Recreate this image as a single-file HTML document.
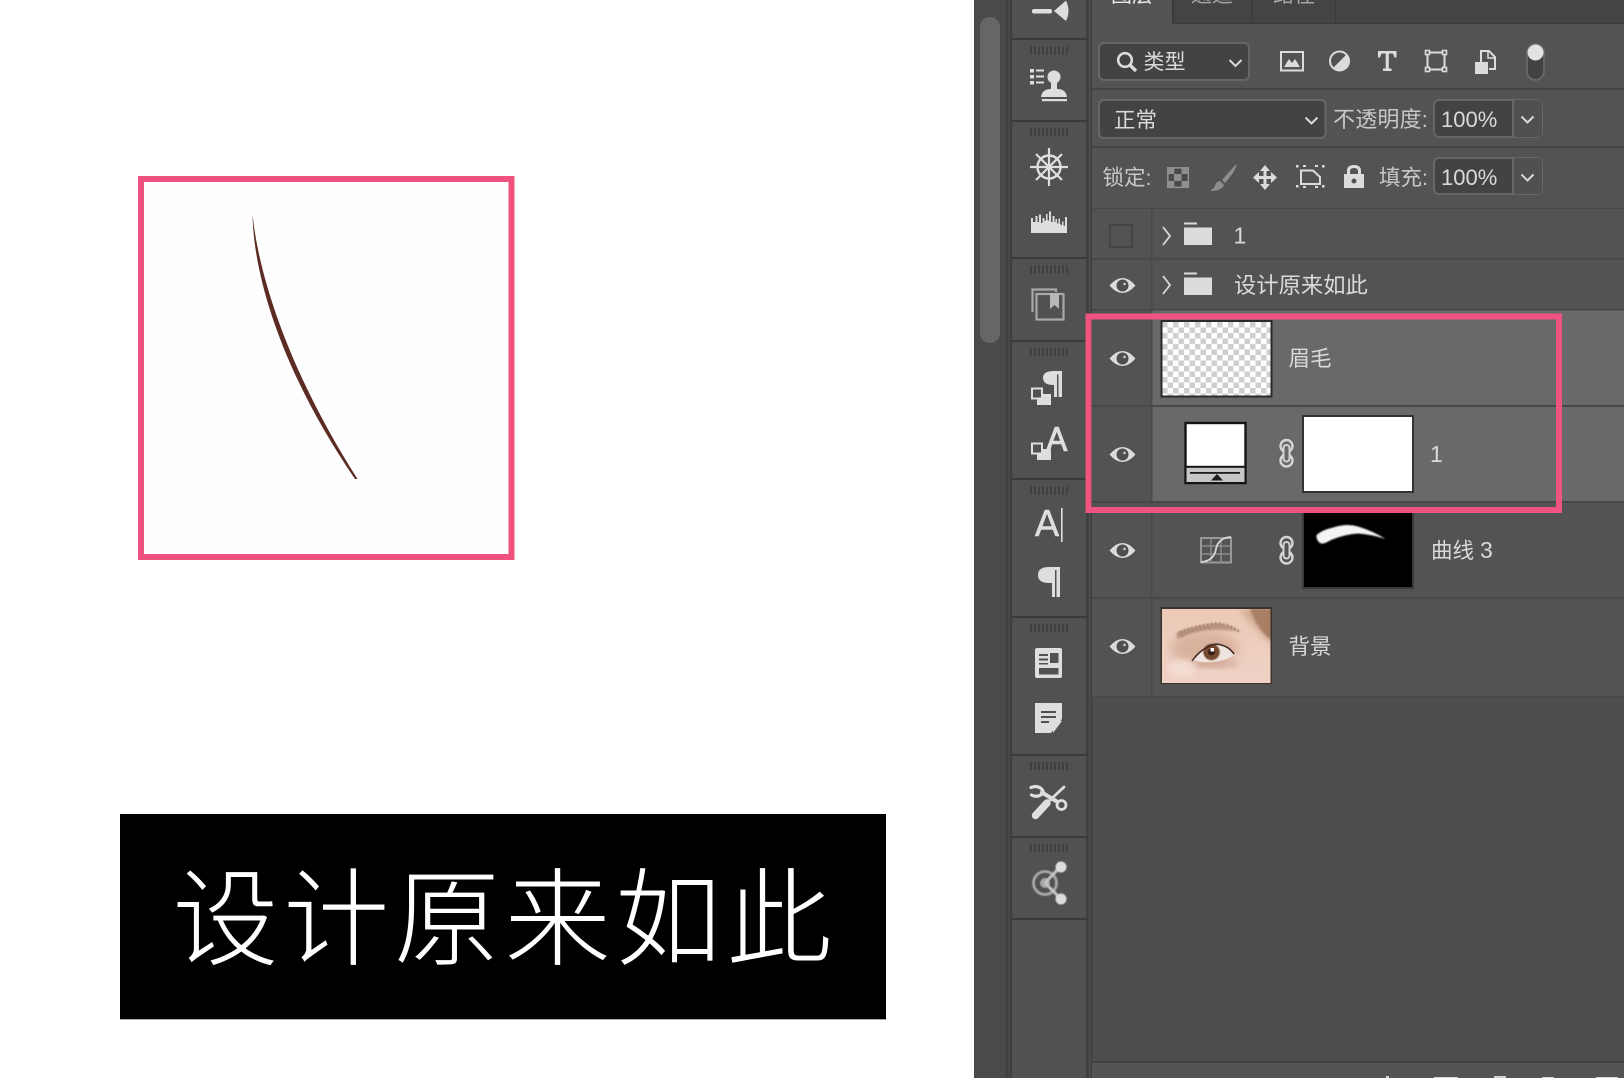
<!DOCTYPE html>
<html lang="zh">
<head>
<meta charset="utf-8">
<title>设计原来如此</title>
<style>
html,body{margin:0;padding:0;background:#fff;width:1624px;height:1078px;overflow:hidden}
svg{display:block}
text{font-family:"Liberation Sans","Noto Sans CJK SC",sans-serif;fill:#d9d9d9;font-size:21px}
.l{fill:#dadada}
</style>
</head>
<body>
<svg xmlns="http://www.w3.org/2000/svg" width="1624" height="1078" viewBox="0 0 1624 1078">
<defs>
<pattern id="chk" x="1162" y="322" width="11" height="11" patternUnits="userSpaceOnUse">
<rect width="11" height="11" fill="#fff"/><rect width="5.500" height="5.500" fill="#cfcfcf"/><rect x="5.500" y="5.500" width="5.500" height="5.500" fill="#cfcfcf"/>
</pattern>
<linearGradient id="skin" x1="0" y1="0" x2="0" y2="1"><stop offset="0" stop-color="#ecc9b6"/><stop offset="1" stop-color="#efd2c5"/></linearGradient>
<filter id="b1"><feGaussianBlur stdDeviation="1"/></filter>
<filter id="b3"><feGaussianBlur stdDeviation="3"/></filter>
<filter id="b5"><feGaussianBlur stdDeviation="5"/></filter>
<filter id="b05"><feGaussianBlur stdDeviation=".5"/></filter>
<filter id="b07"><feGaussianBlur stdDeviation=".8"/></filter>
<clipPath id="ph"><rect x="1162" y="609" width="108.500" height="74"/></clipPath>
<g id="eye"><path d="M1109.5 0Q1122.5-15 1135.5 0Q1122.5 15 1109.5 0Z" fill="#dcdcdc"/><circle cx="1122.5" cy="0" r="6" fill="#4f4f4f"/><circle cx="1124.5" cy="-1.5" r="1.2" fill="#dcdcdc"/></g>
<g id="link" fill="none" stroke="#d4d4d4" stroke-width="2.400">
<circle cx="1286.500" cy="446" r="6"/><circle cx="1286.500" cy="460.500" r="6"/>
<rect x="1283.500" y="445" width="6" height="16.500" rx="3" fill="currentColor" stroke-width="2"/>
</g>
<g id="grip"><path d="M1030 0H1069" stroke="#404040" stroke-width="8" stroke-dasharray="2 2" fill="none"/></g>
<path id="chev" d="M0 0L6 6L12 0" fill="none" stroke="#d9d9d9" stroke-width="2"/>
</defs>

<rect width="1624" height="1078" fill="#fff"/>

<!-- left artwork -->
<rect x="141" y="179" width="370.500" height="378" fill="#fefefe" stroke="#f0527f" stroke-width="6"/>
<path d="M252.500 214C258 270 285 365 357.500 479L355 479C280 369 253.500 274 252.500 214Z" fill="#5c2b24"/>
<rect x="120" y="814" width="766" height="205" fill="#000"/>
<rect x="120" y="1019" width="766" height="1" fill="#aaa"/>
<text x="172.500" y="957" style="font-size:106px;font-weight:300;fill:#fff;letter-spacing:4.700px">设计原来如此</text>

<!-- panel base -->
<rect x="974" y="0" width="650" height="1078" fill="#4e4e4e"/>
<rect x="974" y="0" width="32" height="1078" fill="#4a4a4a"/>
<rect x="980" y="17" width="20" height="326" rx="10" fill="#666"/>
<rect x="1006" y="0" width="6" height="1078" fill="#474747"/>
<rect x="1006" y="0" width="1.5" height="1078" fill="#3c3c3c"/>
<rect x="1010.5" y="0" width="1.5" height="1078" fill="#3c3c3c"/>
<rect x="1012" y="0" width="75" height="1078" fill="#515151"/>
<rect x="1086.5" y="0" width="2" height="1078" fill="#3c3c3c"/>
<rect x="1088.5" y="0" width="2.5" height="1078" fill="#4a4a4a"/>
<rect x="1091" y="0" width="1.5" height="1078" fill="#3e3e3e"/>

<!-- toolbar separators -->
<g fill="#3a3a3a">
<rect x="1011" y="38" width="76" height="2"/><rect x="1011" y="120" width="76" height="2"/><rect x="1011" y="257" width="76" height="2"/><rect x="1011" y="340" width="76" height="2"/><rect x="1011" y="478" width="76" height="2"/><rect x="1011" y="616" width="76" height="2"/><rect x="1011" y="754" width="76" height="2"/><rect x="1011" y="836" width="76" height="2"/><rect x="1011" y="918" width="76" height="2"/>
</g>
<use href="#grip" y="50.5"/><use href="#grip" y="132"/><use href="#grip" y="269.5"/><use href="#grip" y="352"/><use href="#grip" y="490.5"/><use href="#grip" y="628"/><use href="#grip" y="766"/><use href="#grip" y="848"/>

<!-- toolbar icons -->
<g fill="#dedede">
<!-- light -->
<rect x="1032" y="9" width="20" height="4.5" rx="2"/><path d="M1054 11L1066 0.5Q1071 11 1066 21Z"/>
<!-- stamp -->
<rect x="1030" y="69" width="4" height="3.5"/><rect x="1030" y="75" width="4" height="3.5"/><rect x="1030" y="81" width="4" height="3.5"/>
<rect x="1036" y="69.5" width="8" height="2"/><rect x="1036" y="75.5" width="8" height="2"/><rect x="1036" y="81.5" width="8" height="2"/>
<circle cx="1054" cy="77" r="6.5"/><path d="M1051 80H1057L1057 89Q1066 89 1067 97H1041Q1042 89 1051 89Z"/><rect x="1042" y="99" width="25" height="2.2"/>
<!-- histogram -->
<path d="M1031 233V218H1033V222H1035.500V216H1037.500V222H1039V214.500H1041V223H1042.500V218H1044.500V221.500L1046 220V214H1047.500V220L1049 221V211.500H1051V222H1052.500V216H1054.500V222H1055.500V219H1057V223.500H1058.500V218.500H1060V224L1062 225.500V221.500H1063.500V225.500L1065 226V217H1067V233Z"/>
<!-- para styles -->
<path d="M1054 371H1062V397H1058.5V374.5H1057V397H1054V385Q1043 385 1043 378Q1043 371 1054 371Z"/>
<rect x="1037" y="394" width="14" height="11"/>
<rect x="1032" y="388.5" width="10" height="10" fill="#515151" stroke="#dedede" stroke-width="2"/>
<!-- A styles -->
<rect x="1037" y="449" width="14" height="11"/>
<rect x="1032" y="443.5" width="10" height="10" fill="#515151" stroke="#dedede" stroke-width="2"/>
<path d="M1046 451L1055 427H1058.5L1067.5 451H1064L1061.5 444H1052L1049.5 451ZM1053 441H1060.5L1056.8 431Z" stroke="#dedede" stroke-width=".6"/>
<!-- A| -->
<path d="M1035 536L1045 510H1049L1059 536H1055.5L1053 529.5H1041L1038.5 536ZM1042 526.5H1052L1047 513Z" stroke="#dedede" stroke-width=".6"/>
<rect x="1061" y="508" width="1.6" height="34"/>
<!-- para -->
<path d="M1049 567H1060V597H1056.5V570H1055V597H1052V583H1049Q1038 583 1038 575Q1038 567 1049 567Z"/>
<!-- article -->
<path d="M1037 648H1060Q1062 648 1062 650V676Q1062 678 1060 678H1037Q1035 678 1035 676V650Q1035 648 1037 648Z"/>
<g fill="#515151"><rect x="1039" y="654" width="9" height="2"/><rect x="1039" y="658.500" width="9" height="2"/><rect x="1039" y="663" width="9" height="1.500"/><rect x="1050" y="653" width="8.500" height="10"/><rect x="1039" y="668" width="19.500" height="6.500"/></g>
<!-- note -->
<path fill-rule="evenodd" d="M1035 703H1062V719L1051 733H1035ZM1041 711V713H1056V711ZM1041 716V718H1056V716ZM1041 721V723H1049V721Z"/>
<path d="M1053 733V721H1062Z"/>
</g>
<!-- helm -->
<g fill="none" stroke="#dedede" stroke-width="2.4">
<circle cx="1049" cy="167" r="11.5"/>
<path d="M1049 148V186M1030 167H1068M1036 154L1062 180M1062 154L1036 180" stroke-width="2.2"/>
</g>
<!-- book -->
<g fill="none" stroke="#a8a8a8" stroke-width="2.2">
<path d="M1032.500 312V289.500H1056V292"/>
<rect x="1036.500" y="294" width="27" height="25.500"/>
</g>
<path d="M1050 293H1059V309L1054.500 305L1050 309Z" fill="#b8b8b8"/>
<!-- tools -->
<g fill="none" stroke="#dedede" stroke-linecap="round">
<path d="M1035.500 815.500L1047 803" stroke-width="7.500"/>
<path d="M1047 803L1064 787" stroke-width="2.800"/>
<path d="M1031 787.500Q1039 784.500 1043 791" stroke-width="3.200"/>
<path d="M1031.500 795Q1037 798 1042 794" stroke-width="3.200"/>
<path d="M1042 792.500L1056 801" stroke-width="4"/>
<circle cx="1061.500" cy="805" r="4.500" stroke-width="2.800"/>
</g>
<!-- share -->
<g filter="url(#b05)">
<circle cx="1045" cy="883" r="11.500" fill="none" stroke="#a8a8a8" stroke-width="2.800"/>
<circle cx="1045" cy="883" r="5" fill="#a8a8a8"/>
<path d="M1045 883L1061 866M1045 883L1061 899" stroke="#c4c4c4" stroke-width="3" fill="none"/>
<circle cx="1061" cy="867" r="5.500" fill="#dcdcdc"/><circle cx="1061" cy="899" r="5.500" fill="#dcdcdc"/>
</g>

<!-- tabs -->
<rect x="1092" y="0" width="532" height="23" fill="#444"/>
<rect x="1092" y="0" width="80" height="24" fill="#545454"/>
<rect x="1172" y="0" width="2" height="24" fill="#3b3b3b"/>
<rect x="1172" y="22.500" width="452" height="1.500" fill="#3b3b3b"/>
<rect x="1251" y="0" width="1.500" height="23" fill="#3b3b3b"/>
<rect x="1335" y="0" width="1.500" height="23" fill="#3b3b3b"/>
<text x="1111" y="2" style="fill:#e8e8e8;font-size:21px">图层</text>
<text x="1191" y="2" style="fill:#a6a6a6;font-size:21px">通道</text>
<text x="1273" y="2" style="fill:#a6a6a6;font-size:21px">路径</text>

<!-- control rows -->
<rect x="1092" y="24" width="532" height="185" fill="#535353"/>
<rect x="1092" y="88" width="532" height="2" fill="#434343"/>
<rect x="1092" y="146" width="532" height="2" fill="#434343"/>
<rect x="1092" y="208" width="532" height="1.500" fill="#484848"/>

<!-- filter select -->
<rect x="1099" y="43" width="150" height="37" rx="5" fill="#434343" stroke="#666" stroke-width="2"/>
<circle cx="1125" cy="60" r="6.800" fill="none" stroke="#dcdcdc" stroke-width="2.600"/>
<path d="M1130 65L1136 71" stroke="#dcdcdc" stroke-width="3.400" fill="none"/>
<text x="1143.500" y="69" style="font-size:21px" class="l">类型</text>
<use href="#chev" x="1229.500" y="60"/>

<!-- filter icons -->
<g>
<rect x="1281" y="52" width="22" height="18.500" fill="none" stroke="#dcdcdc" stroke-width="2"/>
<path d="M1284 67L1289 59L1292 63L1295 59L1300 67Z" fill="#dcdcdc"/>
<circle cx="1339.500" cy="61" r="9.500" fill="none" stroke="#dcdcdc" stroke-width="2"/>
<path d="M1346.500 54.500A9.500 9.500 0 0 1 1333 68Z" fill="#dcdcdc"/>
<path d="M1378 51H1396.500V57.500H1394.500L1393 53.500H1388.800V68.500H1391.500V71H1383V68.500H1385.700V53.500H1381.500L1380 57.500H1378Z" fill="#dcdcdc"/>
<rect x="1427.500" y="52.500" width="17" height="17" fill="none" stroke="#dcdcdc" stroke-width="2"/>
<g fill="#535353" stroke="#dcdcdc" stroke-width="1.600"><rect x="1425.500" y="50.500" width="4" height="4"/><rect x="1442.500" y="50.500" width="4" height="4"/><rect x="1425.500" y="67.500" width="4" height="4"/><rect x="1442.500" y="67.500" width="4" height="4"/></g>
<path d="M1481 62V51H1489L1495 57V69H1489" fill="none" stroke="#dcdcdc" stroke-width="2"/>
<path d="M1488 52V58H1495" fill="none" stroke="#dcdcdc" stroke-width="1.500"/>
<rect x="1475" y="62" width="13" height="12" fill="#dcdcdc"/>
<rect x="1527" y="44" width="17" height="36" rx="8.500" fill="#434343" stroke="#666" stroke-width="2"/>
<circle cx="1535.500" cy="52.500" r="8" fill="#e2e2e2"/>
</g>

<!-- blend row -->
<rect x="1099" y="100" width="226.500" height="38" rx="5" fill="#434343" stroke="#666" stroke-width="2"/>
<text x="1114" y="127.500" style="font-size:21.500px" class="l">正常</text>
<use href="#chev" x="1305.500" y="117.500"/>
<text x="1333" y="127" style="font-size:22px;fill:#c8c8c8;letter-spacing:.2px">不透明度:</text>
<rect x="1434" y="100" width="108" height="37" rx="5" fill="#434343" stroke="#666" stroke-width="2"/>
<rect x="1513" y="100" width="29" height="37" rx="4" fill="#505050"/>
<rect x="1512" y="100" width="2" height="37" fill="#666"/>
<text x="1441" y="127" style="font-size:22px" class="l">100%</text>
<use href="#chev" x="1521.500" y="116.500"/>

<!-- lock row -->
<text x="1102.500" y="185" style="font-size:21.500px;fill:#c8c8c8">锁定:</text>
<rect x="1167.800" y="167.800" width="20.500" height="19.500" fill="#4a4a4a" stroke="#8f8f8f" stroke-width="1.600"/>
<g fill="#8f8f8f"><rect x="1167" y="167" width="7.300" height="7"/><rect x="1181.500" y="167" width="7.500" height="7"/><rect x="1174" y="174" width="7.500" height="7"/><rect x="1167" y="181" width="7.300" height="7"/><rect x="1181.500" y="181" width="7.500" height="7"/></g>
<path d="M1237 164Q1233 167 1222 180L1225 183Q1235 172 1237 164Z" fill="#8d8d8d"/>
<path d="M1220 181L1224 185Q1222 191 1210 191Q1214 188 1215 186Q1216 181 1220 181Z" fill="#8d8d8d"/>
<g fill="#dcdcdc">
<path d="M1253 177.500L1259 172V176H1263.500V171H1260L1265 165L1270 171H1266.500V176H1271V172L1277 177.500L1271 183V179H1266.500V184H1270L1265 190L1260 184H1263.500V179H1259V183Z"/>
</g>
<path d="M1301 170.500H1313L1320 177V184H1301Z" fill="none" stroke="#dcdcdc" stroke-width="2"/>
<g fill="#dcdcdc"><rect x="1296" y="165" width="2.500" height="2.500"/><rect x="1322" y="165" width="2.500" height="2.500"/><rect x="1296" y="185" width="2.500" height="2.500"/><rect x="1322" y="185" width="2.500" height="2.500"/><rect x="1303" y="165" width="3" height="2"/><rect x="1315" y="165" width="3" height="2"/><rect x="1303" y="186" width="3" height="2"/><rect x="1315" y="186" width="3" height="2"/></g>
<path fill-rule="evenodd" d="M1344 174H1347V171Q1347 165 1354 165Q1361 165 1361 171V174H1364V188H1344ZM1350 171V174H1358V171Q1358 168 1354 168Q1350 168 1350 171ZM1354 178.500A2.500 2.500 0 1 0 1354.010 178.500Z" fill="#dcdcdc"/>
<text x="1379" y="185" style="font-size:21.500px;fill:#c8c8c8">填充:</text>
<rect x="1434" y="158" width="108" height="36" rx="5" fill="#434343" stroke="#666" stroke-width="2"/>
<rect x="1513" y="158" width="29" height="36" rx="4" fill="#505050"/>
<rect x="1512" y="158" width="2" height="36" fill="#666"/>
<text x="1441" y="185" style="font-size:22px" class="l">100%</text>
<use href="#chev" x="1521.500" y="174.500"/>

<!-- layer rows -->
<rect x="1092" y="209" width="532" height="488" fill="#535353"/>
<rect x="1152" y="310" width="472" height="192" fill="#696969"/>
<rect x="1092" y="258" width="532" height="1.500" fill="#464646"/>
<rect x="1092" y="309" width="532" height="1.500" fill="#464646"/>
<rect x="1092" y="405" width="532" height="2" fill="#484848"/>
<rect x="1092" y="501" width="532" height="2" fill="#474747"/>
<rect x="1092" y="597" width="532" height="2" fill="#484848"/>
<rect x="1092" y="696" width="532" height="2" fill="#484848"/>
<rect x="1151" y="209" width="1.500" height="488" fill="#4a4a4a"/>

<!-- row 1 -->
<rect x="1110" y="225" width="22" height="22" fill="none" stroke="#444" stroke-width="2"/>
<path d="M1163 227L1170 236L1163 245" fill="none" stroke="#d9d9d9" stroke-width="1.800"/>
<rect x="1184" y="222.500" width="13" height="2" fill="#dcdcdc"/>
<rect x="1184" y="227.500" width="28" height="17.500" fill="#dcdcdc"/>
<text x="1233.500" y="243.500" style="font-size:23px" class="l">1</text>
<!-- row 2 -->
<use href="#eye" y="285.500"/>
<path d="M1163 276L1170 285L1163 294" fill="none" stroke="#d9d9d9" stroke-width="1.800"/>
<rect x="1184" y="272.500" width="13" height="2" fill="#dcdcdc"/>
<rect x="1184" y="277.500" width="28" height="17.500" fill="#dcdcdc"/>
<text x="1234" y="293" style="font-size:22.300px" class="l">设计原来如此</text>
<!-- row 3 -->
<use href="#eye" y="358.500"/>
<rect x="1161.500" y="321" width="110" height="75.500" fill="url(#chk)" stroke="#2a2a2a" stroke-width="2"/>
<text x="1288.500" y="366" style="font-size:21.500px" class="l">眉毛</text>
<!-- row 4 -->
<use href="#eye" y="454.500"/>
<rect x="1185.500" y="423" width="60" height="60" fill="#fff" stroke="#141414" stroke-width="2.400"/>
<rect x="1186.500" y="467.500" width="58" height="14.500" fill="#c6c6c6"/>
<rect x="1185.500" y="465.800" width="60" height="2" fill="#141414"/>
<rect x="1190" y="472" width="50" height="1.800" fill="#1e1e1e"/>
<path d="M1211 480.500L1217 474L1223 480.500Z" fill="#1e1e1e"/>
<use href="#link" y="0" color="#696969"/>
<rect x="1303" y="416" width="110" height="76" fill="#fff" stroke="#333" stroke-width="2"/>
<text x="1430" y="462" style="font-size:23px" class="l">1</text>
<!-- row 5 -->
<use href="#eye" y="550.500"/>
<g>
<rect x="1201" y="538" width="30" height="24.500" fill="none" stroke="#999" stroke-width="2"/>
<path d="M1211 538V563M1221 538V563M1201 546H1231M1201 554H1231" stroke="#8c8c8c" stroke-width="1.500" fill="none"/>
<path d="M1201 562Q1214 561 1216 549Q1218 538 1231 537" fill="none" stroke="#d8d8d8" stroke-width="1.800"/>
</g>
<use href="#link" y="97" color="#535353"/>
<rect x="1303" y="510" width="110" height="78" fill="#000" stroke="#3a3a3a" stroke-width="2"/>
<path d="M1316.500 535Q1322 530 1333 527.500Q1347 523 1358 526.500Q1373 531 1385.500 539Q1372 534.500 1358 533.500Q1344 534.500 1331 540Q1323 545 1320 543Q1316 540 1316.500 535Z" fill="#f4f4f4" filter="url(#b07)"/>
<text x="1431" y="558" style="font-size:21.500px" class="l">曲线 <tspan style="font-size:23px">3</tspan></text>
<!-- row 6 -->
<use href="#eye" y="646.500"/>
<rect x="1160.500" y="607" width="111.500" height="77" fill="#3c322d"/>
<g clip-path="url(#ph)">
<rect x="1162" y="609" width="109" height="74" fill="url(#skin)"/>
<path d="M1250 609Q1256 628 1272 641V609Z" fill="#9a6f55" filter="url(#b1)"/>
<path d="M1240 609Q1250 625 1272 645V609Z" fill="#b98f76" opacity=".5" filter="url(#b3)"/>
<ellipse cx="1205" cy="648" rx="34" ry="17" fill="#c99c85" opacity=".55" filter="url(#b5)"/>
<ellipse cx="1215" cy="664" rx="24" ry="5" fill="#b88d78" opacity=".35" filter="url(#b3)"/>
<path d="M1176 633Q1195 625 1218 623Q1231 625 1241 632Q1225 629 1210 630Q1192 631 1178 639Z" fill="#9c7764" opacity=".65" filter="url(#b1)"/>
<g filter="url(#b05)" fill="none" opacity=".7">
<path d="M1180 632Q1198 625 1218 623.500Q1231 625 1240 632" stroke="#7d5b4b" stroke-width="2" stroke-dasharray="1.500 2.500"/>
<path d="M1182 636Q1196 629 1212 627" stroke="#8a6858" stroke-width="2" stroke-dasharray="1 3"/>
</g>
<path d="M1193 660Q1202 648 1216 645Q1228 646 1234 655Q1226 661 1212 662Q1201 663 1193 660Z" fill="#efe4df"/>
<circle cx="1211.500" cy="652" r="8.200" fill="#74462f" filter="url(#b05)"/>
<circle cx="1211.500" cy="652" r="3.300" fill="#2f1b13"/>
<rect x="1210.500" y="648" width="3.500" height="3.500" fill="#fff"/>
<path d="M1192 661Q1202 647 1216 644Q1228 645 1234 654" fill="none" stroke="#3f2a22" stroke-width="1.600"/>
<path d="M1199 648Q1216 637 1232 649" fill="none" stroke="#c6a99b" stroke-width="1" stroke-dasharray="1.500 1.500"/>
<ellipse cx="1182" cy="668" rx="14" ry="8" fill="#f7e3da" opacity=".7" filter="url(#b3)"/>
</g>
<text x="1288.500" y="654" style="font-size:21.500px" class="l">背景</text>

<!-- bottom bar -->
<rect x="1092" y="1062" width="532" height="16" fill="#545454"/>
<rect x="1092" y="1061" width="532" height="2" fill="#424242"/>
<g fill="#d4d4d4">
<rect x="1386" y="1076" width="3" height="2"/><rect x="1434" y="1077" width="24" height="1"/><rect x="1494" y="1076" width="12" height="2"/><rect x="1542" y="1077" width="12" height="1"/><rect x="1596" y="1077" width="22" height="1"/>
</g>

<!-- pink highlight -->
<rect x="1088.500" y="316.500" width="470.500" height="193.500" fill="none" stroke="#ef5380" stroke-width="6"/>
</svg>
</body>
</html>
